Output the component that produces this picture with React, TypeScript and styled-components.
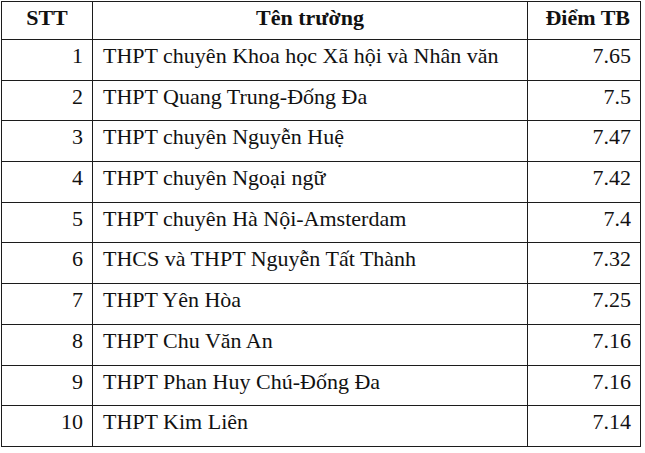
import styled, { createGlobalStyle } from "styled-components";

const GlobalStyle = createGlobalStyle`
  html, body {
    margin: 0;
    padding: 0;
    background: #fff;
  }
`;

const Wrap = styled.div`
  padding: 1px 0 0 1px;
`;

const Table = styled.table`
  border-collapse: collapse;
  width: 639px;
  table-layout: fixed;
  font-family: "Liberation Serif", "Times New Roman", serif;
  color: #111;
`;

const Col = styled.col<{ $w: number }>`
  width: ${(p) => p.$w}px;
`;

const HeadCell = styled.th<{ $align?: string }>`
  border: 1.5px solid #1c1c1c;
  height: 38px;
  box-sizing: border-box;
  padding: 3px 10px 0;
  vertical-align: top;
  font-family: "Liberation Serif", "Times New Roman", serif;
  font-size: 22px;
  line-height: 25px;
  font-weight: bold;
  text-align: ${(p) => p.$align || "center"};
`;

const Cell = styled.td<{ $align?: string }>`
  border: 1.5px solid #1c1c1c;
  height: 40.7px;
  box-sizing: border-box;
  padding: 3px 9px 0 10px;
  vertical-align: top;
  font-family: "Liberation Serif", "Times New Roman", serif;
  font-size: 22px;
  line-height: 25px;
  text-align: ${(p) => p.$align || "left"};
`;

interface IRow {
  name: string;
  score: string;
}

const rows: IRow[] = [
  { name: "THPT chuyên Khoa học Xã hội và Nhân văn", score: "7.65" },
  { name: "THPT Quang Trung-Đống Đa", score: "7.5" },
  { name: "THPT chuyên Nguyễn Huệ", score: "7.47" },
  { name: "THPT chuyên Ngoại ngữ", score: "7.42" },
  { name: "THPT chuyên Hà Nội-Amsterdam", score: "7.4" },
  { name: "THCS và THPT Nguyễn Tất Thành", score: "7.32" },
  { name: "THPT Yên Hòa", score: "7.25" },
  { name: "THPT Chu Văn An", score: "7.16" },
  { name: "THPT Phan Huy Chú-Đống Đa", score: "7.16" },
  { name: "THPT Kim Liên", score: "7.14" },
];

const App = () => {
  return (
    <Wrap>
      <GlobalStyle />
      <Table>
        <colgroup>
          <Col $w={91} />
          <Col $w={435} />
          <Col $w={113} />
        </colgroup>
        <thead>
          <tr>
            <HeadCell>STT</HeadCell>
            <HeadCell>Tên trường</HeadCell>
            <HeadCell $align="right">Điểm TB</HeadCell>
          </tr>
        </thead>
        <tbody>
          {rows.map((row, i) => (
            <tr key={i}>
              <Cell $align="right">{i + 1}</Cell>
              <Cell>{row.name}</Cell>
              <Cell $align="right">{row.score}</Cell>
            </tr>
          ))}
        </tbody>
      </Table>
    </Wrap>
  );
};

export default App;
